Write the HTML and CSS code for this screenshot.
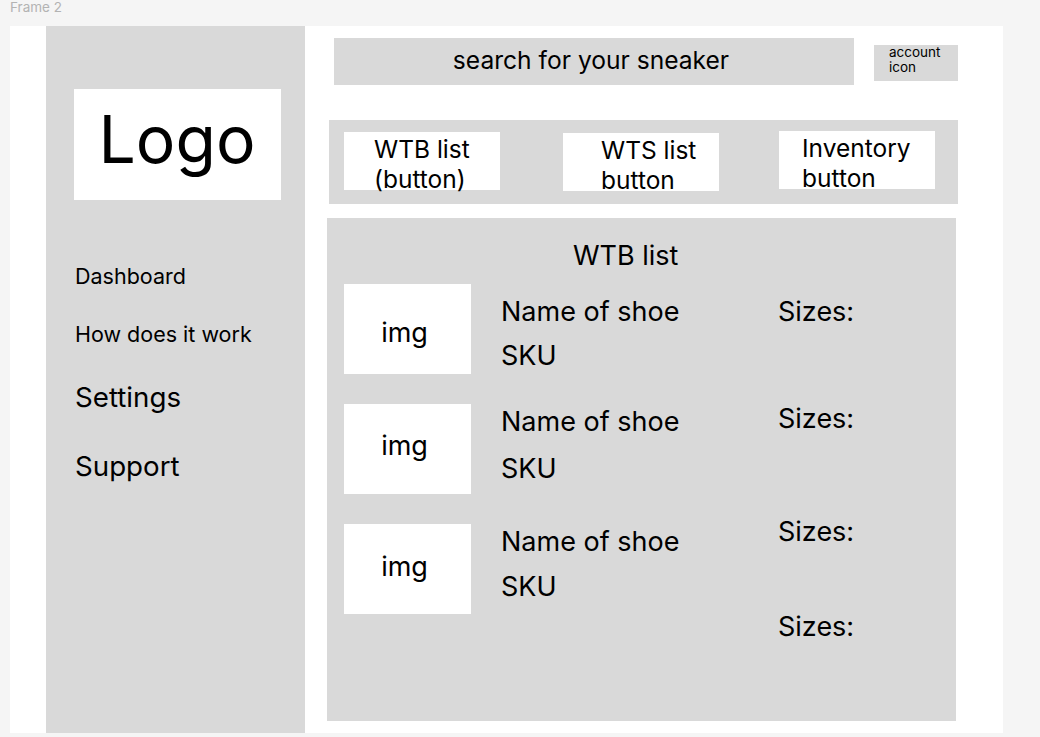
FILE: index.html
```html
<!DOCTYPE html>
<html lang="en">
<head>
    <meta charset="UTF-8">
    <title>Frame 2</title>
    <link rel="stylesheet" href="styles.css">
</head>
<body>
    <div class="frame-label">Frame 2</div>
    <div class="frame">
        <aside class="sidebar">
            <div class="logo">Logo</div>
            <nav class="nav">
                <a class="nav-small">Dashboard</a>
                <a class="nav-small second">How does it work</a>
                <a class="nav-big">Settings</a>
                <a class="nav-big last">Support</a>
            </nav>
        </aside>

        <main class="main">
            <div class="top">
                <div class="search">search for your sneaker</div>
                <div class="account">account<br>icon</div>
            </div>

            <div class="tabs">
                <div class="tab tab-wtb">WTB list<br>(button)</div>
                <div class="tab tab-wts">WTS list<br>button</div>
                <div class="tab tab-inv">Inventory<br>button</div>
            </div>

            <section class="panel">
                <h2>WTB list</h2>

                <div class="row row-first">
                    <div class="img">img</div>
                    <div class="info">
                        <div class="name">Name of shoe</div>
                        <div class="sku">SKU</div>
                    </div>
                    <div class="sizes">Sizes:</div>
                </div>

                <div class="row row-second">
                    <div class="img">img</div>
                    <div class="info">
                        <div class="name">Name of shoe</div>
                        <div class="sku">SKU</div>
                    </div>
                    <div class="sizes">Sizes:</div>
                </div>

                <div class="row row-third">
                    <div class="img">img</div>
                    <div class="info">
                        <div class="name">Name of shoe</div>
                        <div class="sku">SKU</div>
                    </div>
                    <div class="sizes">Sizes:</div>
                </div>

                <div class="row row-extra">
                    <div class="sizes">Sizes:</div>
                </div>
            </section>
        </main>
    </div>
</body>
</html>
```

FILE: styles.css
```css
body {
    margin: 0;
    background: #f5f5f5;
    font-family: Inter, "Noto Sans", sans-serif;
    color: #000;
}

.frame-label {
    font-size: 13.5px;
    line-height: 15px;
    color: #b3b3b3;
    padding: 0 0 0 10px;
    box-sizing: border-box;
    height: 26px;
}

.frame {
    margin: 0 0 0 10px;
    width: 993px;
    height: 707px;
    background: #fff;
    display: flex;
    padding-left: 36px;
    box-sizing: border-box;
}

/* sidebar */
.sidebar {
    width: 259px;
    flex: none;
    background: #d9d9d9;
    padding: 63px 0 0 28px;
    box-sizing: border-box;
}

.logo {
    width: 207px;
    height: 111px;
    background: #fff;
    font-size: 66px;
    line-height: 100px;
    text-align: center;
    padding-left: 1px;
    padding-right: 2px;
    box-sizing: border-box;
}

.nav {
    display: flex;
    flex-direction: column;
    padding: 62px 0 0 1px;
}

.nav a {
    display: block;
    line-height: 28px;
}

.nav-small {
    font-size: 21.5px;
    height: 28px;
}

.nav-small.second {
    margin-top: 30px;
}

.nav-big {
    font-size: 27.7px;
    line-height: 32px !important;
    margin-top: 33px;
}

.nav-big.last {
    margin-top: 37px;
}

/* main area */
.main {
    flex: 1;
}

.top {
    display: flex;
    align-items: flex-start;
    padding: 12px 0 0 29px;
}

.search {
    width: 520px;
    height: 47px;
    background: #d9d9d9;
    font-size: 24.6px;
    line-height: 45px;
    text-align: center;
    padding-right: 6px;
    box-sizing: border-box;
}

.account {
    width: 84px;
    height: 36px;
    margin: 7px 0 0 20px;
    background: #d9d9d9;
    font-size: 13.5px;
    line-height: 15px;
    padding: 0 0 0 15px;
    box-sizing: border-box;
}

.tabs {
    display: flex;
    align-items: flex-start;
    width: 629px;
    height: 84px;
    margin: 35px 0 0 24px;
    background: #d9d9d9;
    padding: 11px 0 0 15px;
    box-sizing: border-box;
}

.tab {
    width: 156px;
    height: 58px;
    background: #fff;
    font-size: 24.5px;
    line-height: 30px;
    padding-top: 2px;
    box-sizing: border-box;
}

.tab-wtb {
    margin-top: 1px;
    padding-left: 30px;
}

.tab-wts {
    margin: 2px 0 0 63px;
    padding-left: 38px;
}

.tab-inv {
    margin-left: 60px;
    padding-left: 23px;
}

/* WTB list panel */
.panel {
    width: 629px;
    height: 503px;
    margin: 14px 0 0 22px;
    background: #d9d9d9;
    padding: 23px 0 0 17px;
    box-sizing: border-box;
}

.panel h2 {
    margin: 0 0 14px 229px;
    font-size: 27px;
    font-weight: normal;
    line-height: 29px;
}

.row {
    display: grid;
    grid-template-columns: 127px 247px auto;
    column-gap: 30px;
    align-items: start;
    height: 90px;
    margin-bottom: 30px;
    font-size: 27px;
    line-height: 29px;
}

.img {
    height: 90px;
    background: #fff;
    display: flex;
    align-items: center;
    justify-content: center;
    padding-right: 6px;
    box-sizing: border-box;
}

.row-first .img {
    padding-top: 6px;
}

.row-second .img {
    padding-bottom: 8px;
}

.row-third .img {
    padding-bottom: 6px;
}

.sku {
    margin-top: 15px;
}

.row-first .name,
.row-first .sizes {
    margin-top: 13px;
}

.row-second .name {
    margin-top: 3px;
}

.row-second .sku {
    margin-top: 18px;
}

.row-second .sizes {
    margin-top: 0;
}

.row-third .name {
    margin-top: 3px;
}

.row-third .sku {
    margin-top: 16px;
}

.row-third .sizes {
    margin-top: -7px;
}

.row-extra {
    height: 29px;
    margin-top: -32px;
}

.row-extra .sizes {
    grid-column: 3;
}
```
